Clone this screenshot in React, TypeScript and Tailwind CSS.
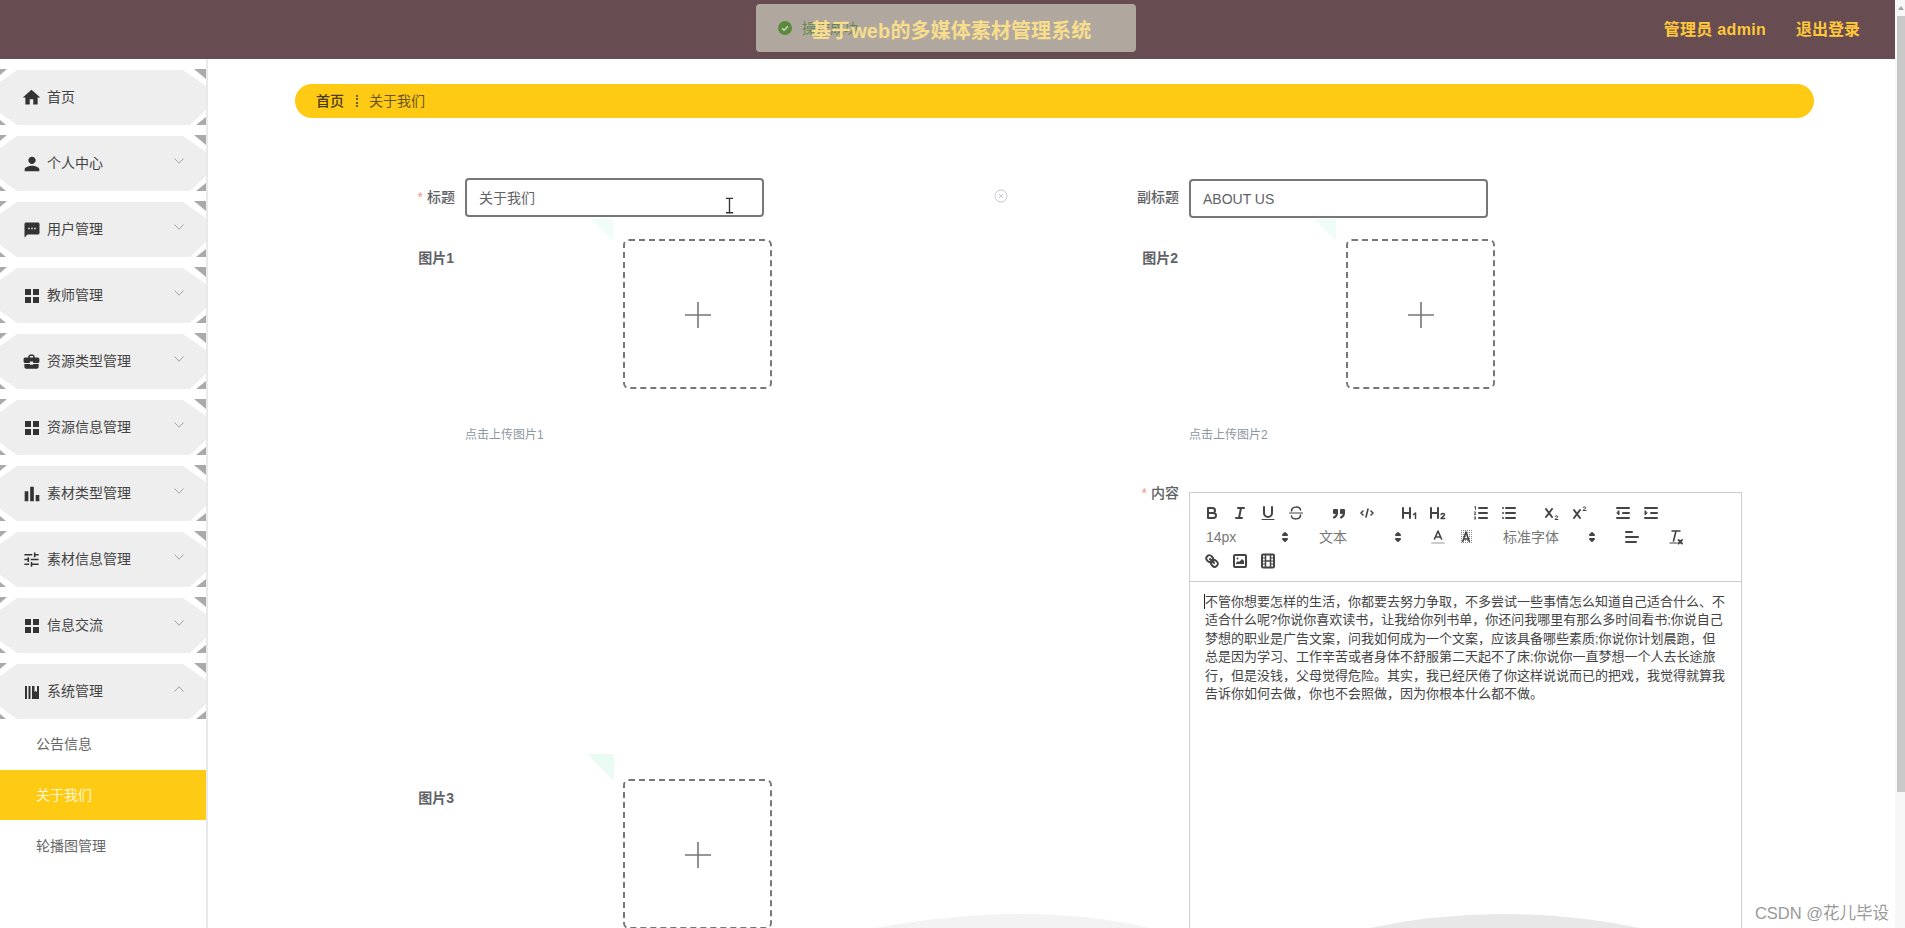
import type { ReactNode } from "react";
import { MdHome, MdPerson, MdSms, MdBusinessCenter, MdBarChart, MdTune } from "react-icons/md";

const content =
  "管你想要怎样的生活\uff0c你都要去努力争取\uff0c不多尝试一些事情怎么知道自己适合什么、不适合什么呢?你说你喜欢读书\uff0c让我给你列书单\uff0c你还问我哪里有那么多时间看书;你说自己梦想的职业是广告文案\uff0c问我如何成为一个文案\uff0c应该具备哪些素质;你说你计划晨跑\uff0c但总是因为学习、工作辛苦或者身体不舒服第二天起不了床;你说你一直梦想一个人去长途旅行\uff0c但是没钱\uff0c父母觉得危险。其实\uff0c我已经厌倦了你这样说说而已的把戏\uff0c我觉得就算我告诉你如何去做\uff0c你也不会照做\uff0c因为你根本什么都不做。";

const GridIcon = () => (
  <svg viewBox="0 0 14 14" className="w-[14px] h-[14px]" fill="#333">
    <rect x="0" y="0" width="6" height="6" />
    <rect x="8" y="0" width="6" height="6" />
    <rect x="0" y="8" width="6" height="6" />
    <rect x="8" y="8" width="6" height="6" />
  </svg>
);

const SystemIcon = () => (
  <svg viewBox="0 0 14 14" className="w-[14px] h-[14px]" fill="#333">
    <rect x="0" y="1" width="2" height="13" />
    <rect x="3.5" y="1" width="2" height="13" />
    <path d="M7 1h2.5v6l1.2-1 1.3 1V1H14v13H7z" />
  </svg>
);

const Chevron = ({ up }: { up?: boolean }) => (
  <svg viewBox="0 0 10 6" className="ml-auto mt-[-5px] w-[10px] h-[6px]" fill="none" stroke="#999" strokeWidth="0.9">
    <path d={up ? "M.5 5.500L5 .8l4.500 4.700" : "M.5 .5L5 5.200 9.500 .5"} />
  </svg>
);

const menus: { label: string; icon: ReactNode; arrow?: "down" | "up" }[] = [
  { label: "首页", icon: <MdHome size={21} color="#333" className="shrink-0" /> },
  { label: "个人中心", icon: <MdPerson size={22} color="#333" className="shrink-0" />, arrow: "down" },
  { label: "用户管理", icon: <MdSms size={18} color="#333" className="shrink-0" />, arrow: "down" },
  { label: "教师管理", icon: <GridIcon />, arrow: "down" },
  { label: "资源类型管理", icon: <MdBusinessCenter size={19} color="#333" className="shrink-0" />, arrow: "down" },
  { label: "资源信息管理", icon: <GridIcon />, arrow: "down" },
  { label: "素材类型管理", icon: <MdBarChart size={22} color="#333" className="shrink-0" />, arrow: "down" },
  { label: "素材信息管理", icon: <MdTune size={19} color="#333" className="shrink-0" />, arrow: "down" },
  { label: "信息交流", icon: <GridIcon />, arrow: "down" },
  { label: "系统管理", icon: <SystemIcon />, arrow: "up" },
];

const MenuItem = ({ label, icon, arrow }: { label: string; icon: ReactNode; arrow?: "down" | "up" }) => (
  <div className="relative h-[55px] w-[206px]">
    <span className="absolute left-0 top-[-1px] w-[7px] h-[6px] bg-[#aaaaaa] [clip-path:polygon(0_0,100%_0,0_100%)]" />
    <span className="absolute right-0 top-[-1px] w-[12px] h-[10px] bg-[#aaaaaa] [clip-path:polygon(0_0,100%_0,100%_100%)]" />
    <span className="absolute left-0 bottom-0 w-[6px] h-[5px] bg-[#aaaaaa] [clip-path:polygon(0_0,100%_100%,0_100%)]" />
    <span className="absolute right-0 bottom-0 w-[10px] h-[8px] bg-[#aaaaaa] [clip-path:polygon(100%_0,100%_100%,0_100%)]" />
    <div className="h-full flex items-center pl-[24px] pr-[22px] bg-[#eeeeee] text-[14px] text-[#444] [clip-path:polygon(17px_0,183px_0,206px_16px,206px_40px,190px_55px,17px_55px,0_43px,0_12px)]">
      <span className="w-[15px] h-[16px] flex items-center justify-center shrink-0">{icon}</span>
      <span className="ml-[8px] mt-[-1px]">{label}</span>
      {arrow && <Chevron up={arrow === "up"} />}
    </div>
  </div>
);

const Sidebar = () => (
  <aside className="w-[208px] shrink-0 h-full pt-[11px] bg-white border-r-2 border-[#e9e9e9]">
    <div className="flex flex-col gap-[11px]">
      {menus.map((m) => (
        <MenuItem key={m.label} {...m} />
      ))}
    </div>
    <div className="w-[206px] text-[14px] pt-[1px]">
      <div className="h-[50px] flex items-center pl-[36px] pb-[2px] text-[#666]">公告信息</div>
      <div className="h-[50px] flex items-center pl-[36px] bg-[#ffca14] text-[#fff6cf]">关于我们</div>
      <div className="h-[50px] flex items-center pl-[36px] pt-[2px] text-[#666]">轮播图管理</div>
    </div>
  </aside>
);

const Upload = ({ faded }: { faded?: boolean }) => (
  <div className="relative w-[149px] h-[150px] border-2 border-dashed border-[#777] rounded-[6px] flex items-center justify-center">
    <span
      className={
        faded
          ? "absolute left-[-34px] top-[-22px] w-[22px] h-[22px] bg-[#f0fcf7] [clip-path:polygon(0_0,100%_0,100%_100%)]"
          : "absolute left-[-38px] top-[-27px] w-[27px] h-[27px] bg-[#eafbf4] [clip-path:polygon(0_0,100%_0,100%_100%)]"
      }
    />
    <svg viewBox="0 0 28 28" className="w-[28px] h-[28px] mt-[2px]" stroke="#777" strokeWidth="1.6">
      <path d="M14 1v26M1 14h26" />
    </svg>
  </div>
);

const ImageField = ({
  label,
  hint,
  boxClass,
  faded,
}: {
  label: string;
  hint?: string;
  boxClass: string;
  faded?: boolean;
}) => (
  <div>
    <div className="flex">
      <label className="w-[114px] text-right text-[14px] font-bold text-[#606266] leading-[38px]">{label}</label>
      <div className={boxClass}>
        <Upload faded={faded} />
      </div>
    </div>
    {hint && <div className="ml-[125px] mt-[38px] text-[12px] leading-[16px] text-[#8d979f]">{hint}</div>}
  </div>
);

const Q = ({ children }: { children: ReactNode }) => (
  <span className="w-[28px] h-[24px] px-[5px] py-[3px] inline-block">
    <svg
      viewBox="0 0 18 18"
      className="w-[18px] h-[18px]"
      fill="none"
      stroke="#444"
      strokeWidth="2"
      strokeLinecap="round"
      strokeLinejoin="round"
    >
      {children}
    </svg>
  </span>
);

const Group = ({ children }: { children: ReactNode }) => <span className="inline-flex mr-[15px]">{children}</span>;

const Picker = ({ label, width }: { label: string; width: string }) => (
  <span className={`${width} h-[24px] flex items-center justify-between pl-[8px] pr-[2px] text-[14px] text-[#777]`}>
    {label}
    <svg viewBox="0 0 18 18" className="w-[18px] h-[18px]" fill="#444" stroke="#444" strokeWidth="2" strokeLinejoin="round">
      <polygon points="7 11 9 13 11 11" />
      <polygon points="7 7 9 5 11 7" />
    </svg>
  </span>
);

const Toolbar = () => (
  <div className="flex flex-wrap p-[8px] border-b border-[#ccc]">
    <Group>
      <Q>
        <path d="M5 4h4.5a2.5 2.5 0 0 1 0 5H5zM5 9h5.5a2.5 2.5 0 0 1 0 5H5z" />
      </Q>
      <Q>
        <path d="M7 4h6M5 14h6M8 14l2-10" />
      </Q>
      <Q>
        <path d="M5 3v6a4 4 0 0 0 8 0V3" />
        <path d="M3 15.5h12" strokeWidth="1" />
      </Q>
      <Q>
        <path d="M4.500 7C4.500 2 13 2 13.500 6M13.500 11C13.500 16 5 16 4.500 12" strokeWidth="1.500" />
        <path d="M2.500 9h13" strokeWidth="1.200" />
      </Q>
    </Group>
    <Group>
      <Q>
        <g fill="#444" stroke="none">
          <rect x="3" y="5" width="5" height="5" rx="1" />
          <rect x="10" y="5" width="5" height="5" rx="1" />
        </g>
        <path d="M7 9c0 2.500-1 3.500-3 4.500M14 9c0 2.500-1 3.500-3 4.500" />
      </Q>
      <Q>
        <path d="M5 7L3 9l2 2M13 7l2 2-2 2M10 5L8 13" strokeWidth="1.600" />
      </Q>
    </Group>
    <Group>
      <Q>
        <path d="M2 4v10M9 4v10M2 9h7" />
        <path d="M12.500 10.500l2-1.500v5.500" strokeWidth="1.500" />
      </Q>
      <Q>
        <path d="M2 4v10M9 4v10M2 9h7" />
        <path d="M12 10.500c.5-1.500 3.500-1.500 3.500.3 0 1.500-3.500 2.500-3.500 3.700h3.700" strokeWidth="1.500" />
      </Q>
    </Group>
    <Group>
      <Q>
        <path d="M7 4h8M7 9h8M7 14h8" />
        <path d="M2.500 3l1-.5v3M2.300 8h1.500l-1.500 2.500h1.500M2.300 13h1.500l-.8 1 .8 1h-1.500" strokeWidth=".9" />
      </Q>
      <Q>
        <path d="M6 4h9M6 9h9M6 14h9M3 4h0M3 9h0M3 14h0" />
      </Q>
    </Group>
    <Group>
      <Q>
        <path d="M3 5l6 8M9 5l-6 8" />
        <path d="M12 12.500c.3-1 2.800-1 2.800.3 0 1-2.800 1.700-2.800 2.700h3" strokeWidth="1" />
      </Q>
      <Q>
        <path d="M3 6l6 8M9 6l-6 8" />
        <path d="M12 3.500c.3-1 2.800-1 2.800.3 0 1-2.800 1.700-2.800 2.700h3" strokeWidth="1" />
      </Q>
    </Group>
    <Group>
      <Q>
        <path d="M3 4h12M3 14h12M9 9h6" />
        <polygon points="5 7 5 11 3 9" fill="#444" strokeWidth="1" />
      </Q>
      <Q>
        <path d="M3 4h12M3 14h12M9 9h6" />
        <polygon points="3 7 3 11 5 9" fill="#444" strokeWidth="1" />
      </Q>
    </Group>
    <span className="inline-flex mr-[15px]">
      <Picker label="14px" width="w-[98px]" />
    </span>
    <span className="inline-flex mr-[15px]">
      <Picker label="文本" width="w-[98px]" />
    </span>
    <Group>
      <Q>
        <path d="M3 15h12" stroke="#ccc" />
        <path d="M5.500 11L9 3l3.500 8M11.600 9H6.400" strokeWidth="1.600" />
      </Q>
      <span className="w-[28px] h-[24px] px-[5px] py-[3px] inline-block">
        <svg viewBox="0 0 18 18" className="w-[18px] h-[18px]" fill="none" strokeLinejoin="round">
          <defs>
            <pattern id="hatch" width="2" height="2" patternUnits="userSpaceOnUse">
              <rect width="1" height="1" fill="#888" />
              <rect x="1" y="1" width="1" height="1" fill="#fff" />
            </pattern>
          </defs>
          <rect x="3" y="2" width="12" height="14" fill="url(#hatch)" />
          <path d="M5.500 14L9 4l3.500 10M11.600 11H6.400" stroke="#444" strokeWidth="1.600" />
        </svg>
      </span>
    </Group>
    <span className="inline-flex mr-[15px]">
      <Picker label="标准字体" width="w-[108px]" />
    </span>
    <Group>
      <Q>
        <path d="M3 4h6M3 9h12M3 14h10" />
      </Q>
    </Group>
    <Group>
      <Q>
        <path d="M6 3h8M10 3L7.500 13" strokeWidth="1.600" />
        <path d="M4 15h7" strokeWidth="1.200" />
        <path d="M12.500 12l3.500 3.500M16 12l-3.500 3.500" strokeWidth="1.800" />
      </Q>
    </Group>
    <Group>
      <Q>
        <path d="M7 7l4 4" />
        <path d="M8.900 4.577a3.476 3.476 0 0 1 .36 4.679A3.476 3.476 0 0 1 4.577 8.900C3.185 7.500 2.035 6.400 4.217 4.217S7.500 3.185 8.900 4.577z" />
        <path d="M13.423 9.100a3.476 3.476 0 0 0-4.679-.36 3.476 3.476 0 0 0 .36 4.679c1.392 1.392 2.500 2.542 4.679.36s1.032-3.279-.36-4.679z" />
      </Q>
      <Q>
        <rect x="3" y="3" width="12" height="12" rx="1" />
        <circle cx="6.500" cy="6.500" r="1" fill="#444" stroke="none" />
        <polygon points="5 12 5 11 7 9 8 10 11 7 13 9 13 12" fill="#444" stroke="none" />
      </Q>
      <Q>
        <rect x="3" y="2.500" width="12" height="13" rx="1" />
        <path d="M6.500 2.500v13M11.500 2.500v13M6.500 9h5" strokeWidth="1.500" />
        <path d="M3 6h3.500M3 9h3.500M3 12h3.500M11.500 6H15M11.500 9H15M11.500 12H15" strokeWidth="1.200" />
      </Q>
    </Group>
  </div>
);

const Editor = () => (
  <div className="w-[553px] h-[437px] border border-[#ccc] border-b-0 ml-[10px]">
    <Toolbar />
    <div className="px-[15px] pt-[11px] text-[13px] leading-[18.46px] text-[#444]">
      <span className="border-l border-[#222] ml-[-1px]">不</span>
      {content}
    </div>
  </div>
);

const App = () => (
  <div className="relative w-[1905px] h-[928px] overflow-hidden bg-white flex font-['Liberation_Sans','Noto_Sans_CJK_SC',sans-serif]">
    <div className="w-[1895px] h-full flex flex-col">
      <header className="relative h-[59px] shrink-0 bg-[#674c52] flex items-center pr-[35px]">
        <div className="absolute left-[756px] top-[4px] z-10 w-[380px] h-[48px] rounded-[4px] bg-[#b0a89f] flex items-center pl-[22px] text-[14px] text-[#67864f]">
          <svg viewBox="0 0 14 14" className="w-[14px] h-[14px] mr-[10px]">
            <circle cx="7" cy="7" r="7" fill="#5c8a3f" />
            <path d="M4 7.200l2.100 2.100L10 5.200" fill="none" stroke="#cfd8c4" strokeWidth="1.400" />
          </svg>
          操作成功
        </div>
        <h1 className="relative z-20 ml-[811px] mt-[3px] text-[20px] leading-[26px] font-bold tracking-[0.1px] text-[#f7dd8c]">
          基于web的多媒体素材管理系统
        </h1>
        <div className="ml-auto flex gap-[30px] text-[16px] font-bold text-[#ffc73a]">
          <span className="tracking-[0.3px]">管理员 admin</span>
          <span>退出登录</span>
        </div>
      </header>
      <div className="flex-1 flex min-h-0">
        <Sidebar />
        <main className="relative flex-1 min-w-0 pl-[87px] pt-[25px]">
          <svg className="absolute left-[-208px] top-0 w-[1895px] h-[869px]" viewBox="0 0 1895 869">
            <path d="M875 869Q1030 841 1150 869z" fill="#f3f3f3" />
            <path d="M1370 869Q1500 841 1640 869z" fill="#e8e8e8" />
          </svg>
          <div className="relative h-[34px] w-[1519px] rounded-full bg-[#ffca14] flex items-center pl-[21px] text-[14px]">
            <span className="font-medium text-[#4a3a1a]">首页</span>
            <span className="ml-[12px] w-[2px] h-[12px] border-l-2 border-dotted border-[#6b5a2a]" />
            <span className="ml-[11px] text-[#6b5320]">关于我们</span>
          </div>
          <div className="relative flex mt-[60px]">
            <div className="w-[724px] ml-[45px] shrink-0">
              <div className="flex items-start">
                <label className="w-[115px] text-right text-[14px] font-medium text-[#606266] leading-[38px]">
                  <span className="text-[#e79a8c] mr-[4px]">*</span>标题
                </label>
                <div className="relative ml-[10px] w-[299px] h-[39px] border-2 border-[#777] rounded-[4px] flex items-center pl-[12px] pt-[2px] text-[14px] text-[#606266]">
                  关于我们
                  <svg viewBox="0 0 10 18" className="absolute left-[258px] top-[17px] w-[9px] h-[17px]" fill="none" stroke="#333" strokeWidth="1.500">
                    <path d="M1 1h8M5 1v16M1 17h8" />
                  </svg>
                </div>
                <svg viewBox="0 0 14 14" className="ml-[230px] mt-[11px] w-[14px] h-[14px]" fill="none" stroke="#c6c9cf">
                  <circle cx="7" cy="7" r="6" />
                  <path d="M5 5l4 4M9 5l-4 4" />
                </svg>
              </div>
              <div className="mt-[22px]">
                <ImageField label="图片1" hint="点击上传图片1" boxClass="ml-[169px]" faded />
              </div>
              <div className="mt-[336px]">
                <ImageField label="图片3" boxClass="ml-[169px]" />
              </div>
            </div>
            <div className="flex-1 pt-px">
              <div className="flex items-start">
                <label className="w-[115px] text-right text-[14px] font-medium text-[#606266] leading-[36px]">副标题</label>
                <div className="ml-[10px] w-[299px] h-[39px] border-2 border-[#777] rounded-[4px] flex items-center pl-[12px] pt-[1px] text-[14px] text-[#606266]">
                  ABOUT US
                </div>
              </div>
              <div className="mt-[21px]">
                <ImageField label="图片2" hint="点击上传图片2" boxClass="ml-[168px]" faded />
              </div>
              <div className="flex items-start mt-[49px]">
                <label className="w-[115px] mt-[-9px] text-right text-[14px] font-medium text-[#606266] leading-[20px]">
                  <span className="text-[#e79a8c] mr-[4px]">*</span>内容
                </label>
                <Editor />
              </div>
            </div>
          </div>
        </main>
      </div>
    </div>
    <div className="w-[10px] h-full bg-[#f7f7f7] flex flex-col items-end">
      <div className="h-[16px] w-[8px] flex items-center justify-center">
        <span className="w-[6px] h-[4px] bg-[#a5a5a5] [clip-path:polygon(50%_0,100%_100%,0_100%)]" />
      </div>
      <div className="w-[8px] h-[776px] bg-[#c8c8c8]" />
    </div>
    <span className="absolute right-[16px] bottom-[3px] text-[16.5px] leading-[24px] text-[#999]">CSDN @花儿毕设</span>
  </div>
);

export default App;
